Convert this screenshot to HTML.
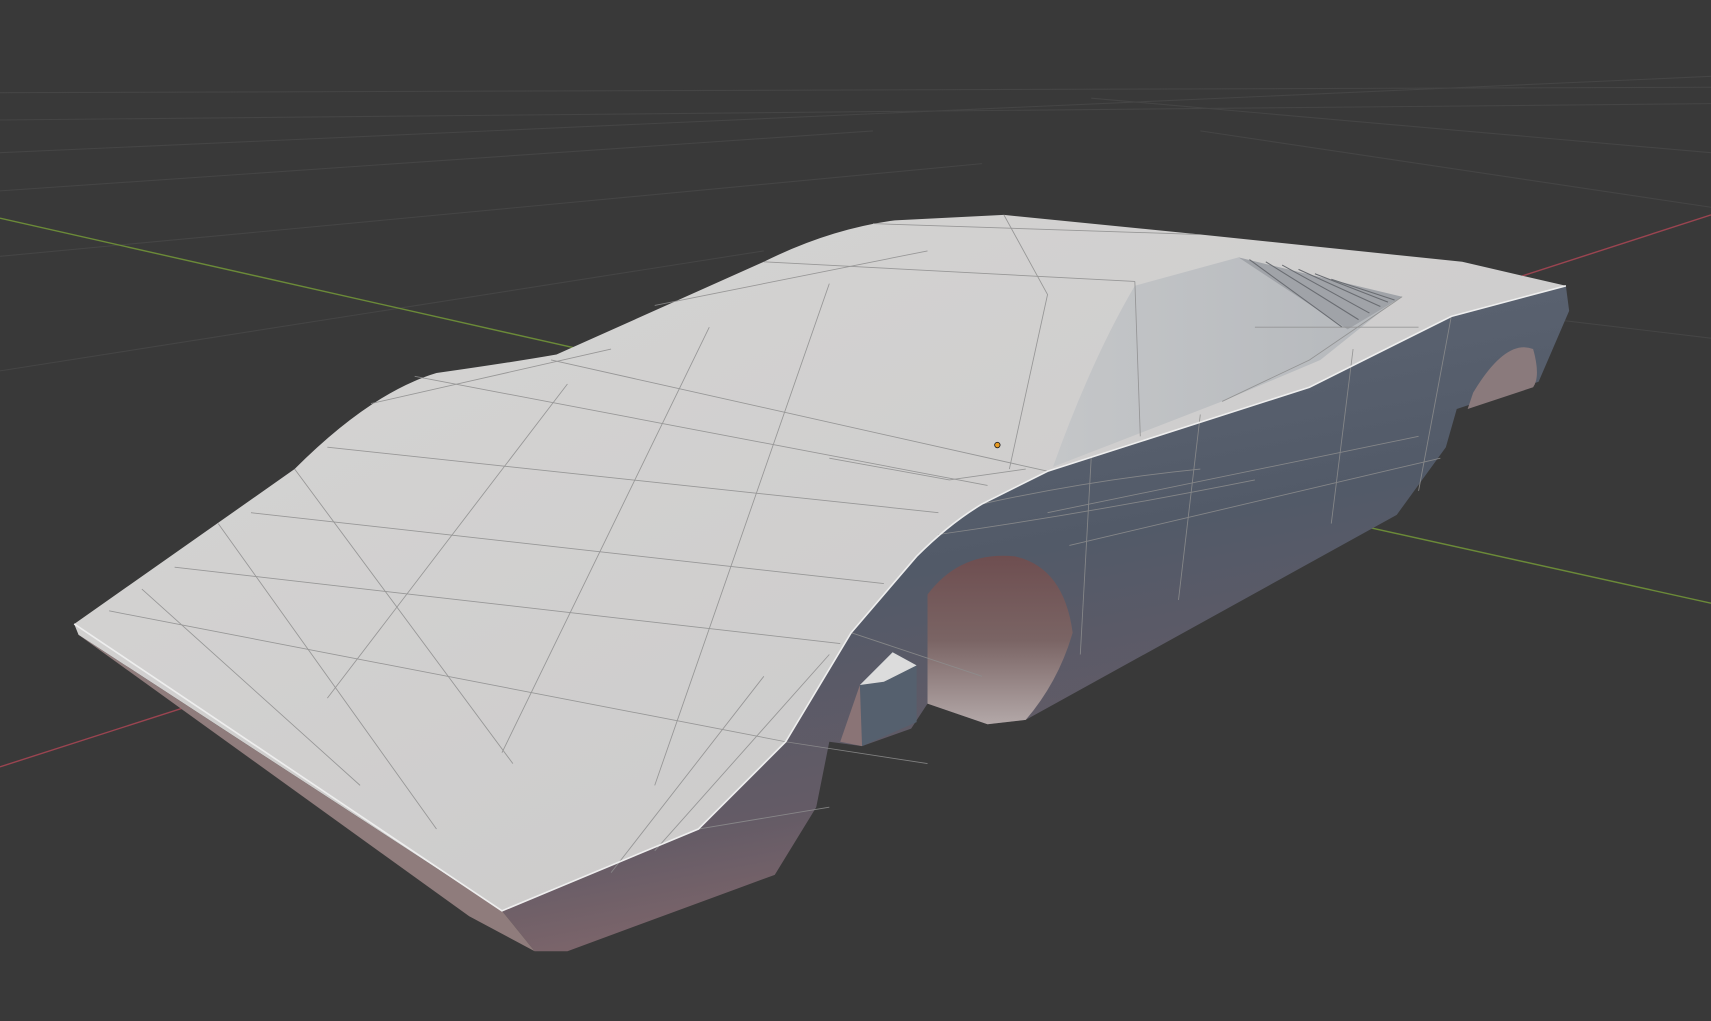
<!DOCTYPE html>
<html><head><meta charset="utf-8"><style>
html,body{margin:0;padding:0;background:#393939;overflow:hidden}
svg{display:block}
</style></head><body>
<svg width="1711" height="1021" viewBox="0 0 1568 936" preserveAspectRatio="none">
<defs>
<linearGradient id="side" x1="0" y1="0" x2="0.3" y2="1">
<stop offset="0" stop-color="#626a78"/><stop offset="0.5" stop-color="#525a68"/><stop offset="0.8" stop-color="#645b66"/><stop offset="1" stop-color="#86696c"/>
</linearGradient>
<linearGradient id="top" x1="0" y1="0" x2="1" y2="1">
<stop offset="0" stop-color="#d6d5d4"/><stop offset="1" stop-color="#c9c8c8"/>
</linearGradient>
<linearGradient id="arch" x1="0" y1="0" x2="0" y2="1">
<stop offset="0" stop-color="#6e4e50"/><stop offset="0.5" stop-color="#7a6464"/><stop offset="1" stop-color="#b3a8a8"/>
</linearGradient>
<linearGradient id="cab" x1="0" y1="0" x2="1" y2="0">
<stop offset="0" stop-color="#c4c6c8"/><stop offset="1" stop-color="#b5b8bc"/>
</linearGradient>
</defs>
<rect width="1568" height="936" fill="#393939"/>
<g stroke="#454545" stroke-width="1" fill="none">
<line x1="0" y1="140" x2="1568" y2="70"/><line x1="0" y1="110" x2="1568" y2="95"/>
<line x1="0" y1="175" x2="800" y2="120"/><line x1="0" y1="235" x2="900" y2="150"/>
<line x1="0" y1="340" x2="700" y2="230"/><line x1="1100" y1="120" x2="1568" y2="190"/>
<line x1="1400" y1="290" x2="1568" y2="310"/><line x1="0" y1="85" x2="1568" y2="80"/>
<line x1="1000" y1="90" x2="1568" y2="140"/>
</g>
<line x1="0" y1="200" x2="540" y2="322" stroke="#6b8a38" stroke-width="1.3"/>
<line x1="1180" y1="467" x2="1568" y2="553" stroke="#6b8a38" stroke-width="1.3"/>
<line x1="0" y1="703" x2="342" y2="593" stroke="#9a4450" stroke-width="1.3"/>
<line x1="1395" y1="253" x2="1568" y2="197" stroke="#9a4450" stroke-width="1.3"/>
<path d="M460,835 L640,760 L720,680 L780,580 L840,510 Q870,480 900,462 L960,432 L1200,355 L1330,290 L1435,262 L1438,285 L1410,350 L1335,375 L1325,410 L1280,472 L940,660 L905,664 L850,645 L835,668 L790,684 L760,680 L748,740 L710,802 L520,872 L490,872 Z" fill="url(#side)"/>
<path d="M850,545 Q880,505 930,510 Q975,520 983,580 Q970,625 940,660 L905,664 L850,645 Z" fill="url(#arch)"/>
<path d="M1350,360 Q1380,310 1405,320 Q1412,345 1405,355 L1345,375 Z" fill="#8a7a7c"/>
<path d="M788,628 L818,598 L840,610 L840,662 L790,684 Z" fill="#55606e"/>
<path d="M788,628 L818,598 L840,610 L810,625 Z" fill="#dcdcdc"/>
<path d="M770,680 L788,628 L790,684 Z" fill="#8a7476"/>
<path d="M68,572 L270,430 Q340,360 400,342 Q470,332 510,325 L700,240 Q760,210 820,202 L920,197 L1100,215 L1340,240 L1435,262 L1330,290 L1200,355 L960,432 L900,462 Q870,480 840,510 L780,580 L720,680 L640,760 L460,835 L72,582 Z" fill="url(#top)"/>
<path d="M72,582 L460,835 L490,872 L430,840 Z" fill="#8f7c7c"/>
<path d="M965,428 Q1000,330 1040,262 L1135,236 L1280,274 L1210,330 L1120,368 Z" fill="url(#cab)"/>
<path d="M1135,236 L1285,272 L1235,302 Z" fill="#a0a3a8"/>
<g stroke="#6a6d72" stroke-width="1">
<line x1="1145" y1="238" x2="1230" y2="300"/><line x1="1160" y1="240" x2="1245" y2="293"/>
<line x1="1175" y1="243" x2="1255" y2="287"/><line x1="1190" y1="247" x2="1265" y2="281"/>
<line x1="1205" y1="251" x2="1272" y2="277"/><line x1="1220" y1="256" x2="1278" y2="275"/>
</g>
<g stroke="#8e8e8e" stroke-width="0.8" fill="none" opacity="0.85">
<path d="M505,330 L960,432"/><path d="M380,345 L905,445"/><path d="M300,410 L860,470"/>
<path d="M230,470 L810,535"/><path d="M160,520 L770,590"/><path d="M100,560 L720,680"/>
<path d="M520,352 L300,640"/><path d="M650,300 L460,690"/><path d="M760,260 L600,720"/>
<path d="M920,197 L960,270 L925,430"/><path d="M700,240 L1040,258"/><path d="M800,205 L1100,215"/>
<path d="M270,430 L470,700"/><path d="M200,480 L400,760"/><path d="M130,540 L330,720"/>
<path d="M760,420 L870,440 L940,430"/><path d="M1040,258 L1045,400"/><path d="M1120,368 L1200,330 L1285,272"/>
<path d="M900,462 Q1000,440 1100,430"/><path d="M860,490 Q1000,470 1150,440"/>
<path d="M1330,290 L1300,450"/><path d="M1240,320 L1220,480"/><path d="M1100,380 L1080,550"/>
<path d="M1000,420 L990,600"/><path d="M760,600 L600,780"/><path d="M700,620 L560,800"/>
<path d="M780,580 L900,620"/><path d="M720,680 L850,700"/><path d="M640,760 L760,740"/>
<path d="M960,470 L1300,400"/><path d="M980,500 L1320,420"/>
<path d="M340,370 L560,320"/><path d="M600,280 L850,230"/><path d="M1150,300 L1300,300"/>
</g>
<path d="M68,572 L460,835 L640,760 L720,680 L780,580 L840,510 Q870,480 900,462 L960,432 L1200,355 L1330,290 L1435,262" stroke="#eeeeee" stroke-width="1.5" fill="none"/>
<circle cx="914" cy="408" r="2.5" fill="#e89a20" stroke="#222" stroke-width="0.8"/>
</svg>
</body></html>
